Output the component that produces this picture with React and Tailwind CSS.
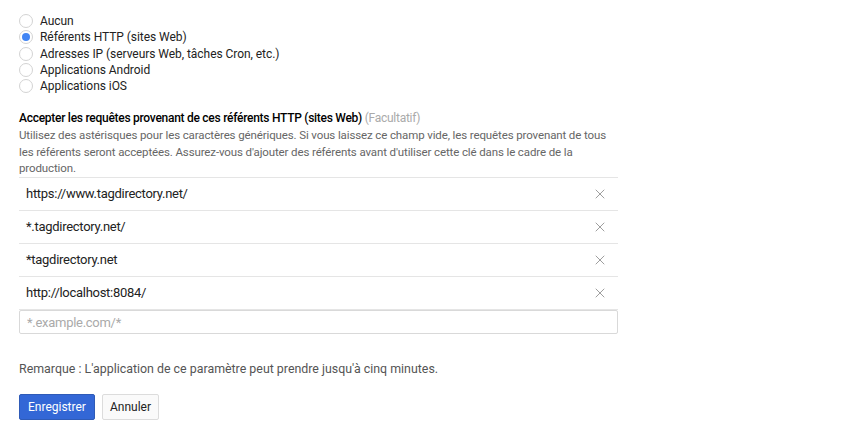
import { X } from "lucide-react";

const options = [
	"Aucun",
	"Référents HTTP (sites Web)",
	"Adresses IP (serveurs Web, tâches Cron, etc.)",
	"Applications Android",
	"Applications iOS",
];

const referrers = [
	"https://www.tagdirectory.net/",
	"*.tagdirectory.net/",
	"*tagdirectory.net",
	"http://localhost:8084/",
];

function Radio({ checked }) {
	return (
		<span className="w-[14px] h-[14px] rounded-full border border-[#d3d3d3] bg-white flex items-center justify-center shrink-0">
			{checked && <span className="w-[8px] h-[8px] rounded-full bg-[#4285f4]" />}
		</span>
	);
}

export default function App() {
	return (
		<div
			className="bg-white w-[865px] h-[434px] pl-[19px] pt-[13px] text-[#222]"
			style={{ fontFamily: "Roboto, 'Liberation Sans', sans-serif" }}
		>
			<div className="flex flex-col">
				{options.map((o, i) => (
					<label key={o} className="flex items-center gap-[7px] h-[16.25px] text-[12px] tracking-[-0.05px] text-[#222]">
						<Radio checked={i === 1} />
						<span>{o}</span>
					</label>
				))}
			</div>

			<div className="mt-[16px] w-[599px]">
				<div className="text-[12px] leading-[17px] font-medium tracking-[-0.27px] text-black">
					Accepter les requêtes provenant de ces référents HTTP (sites Web){" "}
					<span className="font-normal text-[#aaa]">(Facultatif)</span>
				</div>
				<p className="text-[11.5px] leading-[16.5px] tracking-[-0.12px] text-[#666]">
					Utilisez des astérisques pour les caractères génériques. Si vous laissez ce champ vide, les requêtes provenant de tous les référents seront acceptées. Assurez-vous d'ajouter des référents avant d'utiliser cette clé dans le cadre de la production.
				</p>

				<div className="border-t border-[#e5e5e5]">
					{referrers.map((r) => (
						<div key={r} className="h-[33px] flex items-center justify-between border-b border-[#e5e5e5] pl-[7px] pr-[10px] text-[13px] tracking-[-0.28px] text-[#222]">
							<span>{r}</span>
							<X size={16} strokeWidth={1.5} className="text-[#9e9e9e]" />
						</div>
					))}
				</div>

				<input
					placeholder="*.example.com/*"
					className="w-full h-[24px] border border-[#d9d9d9] rounded-[2px] px-[7px] text-[13px] tracking-[-0.28px] placeholder:text-[#aaa] outline-none"
				/>
			</div>

			<p className="mt-[26px] text-[12.4px] text-[#555]">
				Remarque : L'application de ce paramètre peut prendre jusqu'à cinq minutes.
			</p>

			<div className="mt-[15px] flex gap-[7px]">
				<button className="h-[26px] px-[8px] bg-[#3367d6] border border-[#2f5bb7] rounded-[2px] text-white text-[12px]">
					Enregistrer
				</button>
				<button className="h-[26px] px-[7px] bg-[#fafafa] border border-[#dcdcdc] rounded-[2px] text-[#222] text-[12px]">
					Annuler
				</button>
			</div>
		</div>
	);
}
